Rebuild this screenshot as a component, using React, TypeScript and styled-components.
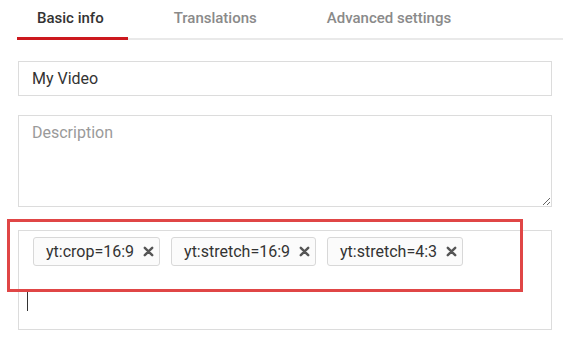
import styled, { createGlobalStyle } from 'styled-components';

const GlobalStyle = createGlobalStyle`
  html, body {
    margin: 0;
    padding: 0;
    background: #ffffff;
  }
  body {
    font-family: Roboto, 'Liberation Sans', Arial, sans-serif;
    color: #333333;
  }
`;

const tabs = ['Basic info', 'Translations', 'Advanced settings'];
const tags = ['yt:crop=16:9', 'yt:stretch=16:9', 'yt:stretch=4:3'];

const CloseIcon = () => (
  <svg width="11" height="11" viewBox="0 0 11 11">
    <path
      d="M1.8 1.8 L9.2 9.2 M9.2 1.8 L1.8 9.2"
      stroke="#555"
      strokeWidth="2.4"
      strokeLinecap="round"
    />
  </svg>
);

const App = () => {
  return (
    <Page>
      <GlobalStyle />
      <TabBar>
        {tabs.map((t, i) => (
          <Tab key={t} active={i === 0}>
            {t}
          </Tab>
        ))}
      </TabBar>

      <Form>
        <TitleInput defaultValue="My Video" />
        <Description placeholder="Description" />
        <TagsBox>
          <ChipRow>
            {tags.map(tag => (
              <Chip key={tag}>
                <span>{tag}</span>
                <CloseIcon />
              </Chip>
            ))}
          </ChipRow>
          <Caret />
        </TagsBox>
      </Form>

      <Highlight />
    </Page>
  );
};

export default App;

const Page = styled.div`
  position: relative;
  width: 566px;
  height: 338px;
  padding: 0 3px 0 17px;
  box-sizing: border-box;
  overflow: hidden;
`;

const TabBar = styled.div`
  display: flex;
  gap: 26px;
  height: 40px;
  border-bottom: 2px solid #e9e9e9;
  box-sizing: border-box;
`;

const Tab = styled.div<{ active?: boolean }>`
  padding: 9px 24px 0 20px;
  margin-bottom: -2px;
  height: 40px;
  box-sizing: border-box;
  font-size: 15px;
  font-weight: 500;
  line-height: 18px;
  color: ${({ active }) => (active ? '#333333' : '#8a8a8a')};
  border-bottom: 3px solid ${({ active }) => (active ? '#cc181e' : 'transparent')};
`;

const Form = styled.div`
  display: flex;
  flex-direction: column;
  width: 535px;
  padding-left: 1px;
  box-sizing: border-box;
  margin-top: 21px;
`;

const fieldBase = `
  width: 100%;
  box-sizing: border-box;
  border: 1px solid #dcdcdc;
  border-radius: 0;
  font-family: Roboto, 'Liberation Sans', Arial, sans-serif;
  font-size: 16px;
  color: #333333;
  outline: none;
  background: #ffffff;
`;

const TitleInput = styled.input`
  ${fieldBase}
  height: 35px;
  padding: 0 13px;
`;

const Description = styled.textarea`
  ${fieldBase}
  display: block;
  height: 92px;
  margin-top: 19px;
  padding: 7px 13px;
  resize: vertical;

  &::placeholder {
    color: #9a9a9a;
  }
`;

const TagsBox = styled.div`
  ${fieldBase}
  height: 100px;
  margin-top: 23px;
  padding: 6px 8px;
`;

const ChipRow = styled.div`
  display: flex;
  gap: 11px;
  padding-left: 6px;
`;

const Chip = styled.div`
  display: flex;
  align-items: center;
  gap: 9px;
  height: 29px;
  box-sizing: border-box;
  padding: 0 5px 0 12px;
  border: 1px solid #d8d8d8;
  border-radius: 3px;
  background: #fbfbfb;
  font-size: 16px;
  color: #333333;
`;

const Caret = styled.div`
  width: 1px;
  height: 21px;
  margin-top: 24px;
  background: #333333;
`;

const Highlight = styled.div`
  position: absolute;
  left: 7px;
  top: 219px;
  width: 516px;
  height: 73px;
  box-sizing: border-box;
  border: 3px solid #e04646;
  pointer-events: none;
`;
